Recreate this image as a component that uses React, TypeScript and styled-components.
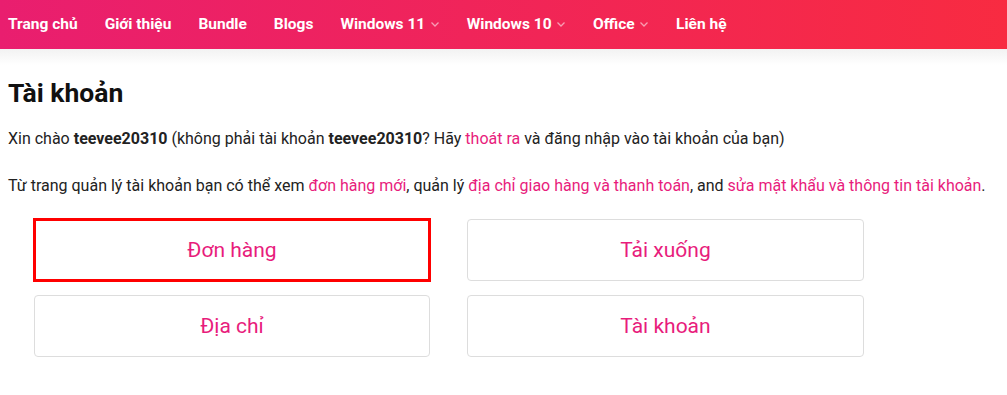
import React from 'react';
import styled, { createGlobalStyle } from 'styled-components';

const pink = '#e81c7c';

const GlobalStyle = createGlobalStyle`
  html, body {
    margin: 0;
    padding: 0;
    background: #fff;
  }
  body {
    font-family: Roboto, 'Liberation Sans', sans-serif;
    color: #222;
  }
`;

const NavBar = styled.nav`
  height: 49px;
  background: linear-gradient(90deg, #e91e6f 0%, #f82b41 100%);
  display: flex;
  align-items: center;
  padding: 0 8px;
  gap: 27px;
  position: relative;
  z-index: 1;
`;

const NavShadow = styled.div`
  height: 16px;
  background: linear-gradient(180deg, #f2f2f2 0%, #ffffff 100%);
`;

const NavItem = styled.a`
  color: #fff;
  font-weight: 700;
  font-size: 15.5px;
  display: inline-flex;
  align-items: center;
  gap: 4.5px;
  text-decoration: none;
  white-space: nowrap;
  margin-bottom: 1px;
`;

const Chevron = styled.svg`
  width: 10px;
  height: 10px;
  opacity: 0.55;
`;

const Main = styled.main`
  padding: 0 8px;
`;

const Title = styled.h1`
  font-size: 26.5px;
  line-height: 30px;
  font-weight: 700;
  margin: 13px 0 20px;
  color: #111;
`;

const Paragraph = styled.p`
  font-size: 16px;
  line-height: 22px;
  margin: 0 0 25px;
  color: #222;
`;

const Link = styled.a`
  color: ${pink};
  text-decoration: none;
`;

const CardGrid = styled.div`
  display: grid;
  grid-template-columns: 396px 397px;
  column-gap: 37px;
  row-gap: 14px;
  margin: -3px 0 0 26px;
`;

const Card = styled.a<{ $focused?: boolean }>`
  height: 60px;
  border: 1px solid #dddddd;
  border-radius: ${({ $focused }) => ($focused ? '0' : '4px')};
  display: flex;
  align-items: center;
  justify-content: center;
  color: ${pink};
  font-size: 21px;
  text-decoration: none;
  ${({ $focused }) => $focused && 'outline: 3px solid #ff0000; outline-offset: -2px;'}
`;

const ChevronIcon = () => (
  <Chevron viewBox="0 0 10 10" fill="none" stroke="#fff" strokeWidth="1.3">
    <path d="M1.5 3.5 L5 7 L8.5 3.5" />
  </Chevron>
);

const navItems: { label: string; dropdown?: boolean }[] = [
  { label: 'Trang chủ' },
  { label: 'Giới thiệu' },
  { label: 'Bundle' },
  { label: 'Blogs' },
  { label: 'Windows 11', dropdown: true },
  { label: 'Windows 10', dropdown: true },
  { label: 'Office', dropdown: true },
  { label: 'Liên hệ' },
];

const App: React.FC = () => (
  <>
    <GlobalStyle />
    <NavBar>
      {navItems.map((item) => (
        <NavItem key={item.label} href="#">
          {item.label}
          {item.dropdown && <ChevronIcon />}
        </NavItem>
      ))}
    </NavBar>
    <NavShadow />
    <Main>
      <Title>Tài khoản</Title>
      <Paragraph>
        Xin chào <strong>teevee20310</strong> (không phải tài khoản{' '}
        <strong>teevee20310</strong>? Hãy <Link href="#">thoát ra</Link> và đăng nhập vào tài
        khoản của bạn)
      </Paragraph>
      <Paragraph>
        Từ trang quản lý tài khoản bạn có thể xem <Link href="#">đơn hàng mới</Link>, quản lý{' '}
        <Link href="#">địa chỉ giao hàng và thanh toán</Link>, and{' '}
        <Link href="#">sửa mật khẩu và thông tin tài khoản</Link>.
      </Paragraph>
      <CardGrid>
        <Card href="#" $focused>
          Đơn hàng
        </Card>
        <Card href="#">Tải xuống</Card>
        <Card href="#">Địa chỉ</Card>
        <Card href="#">Tài khoản</Card>
      </CardGrid>
    </Main>
  </>
);

export default App;
